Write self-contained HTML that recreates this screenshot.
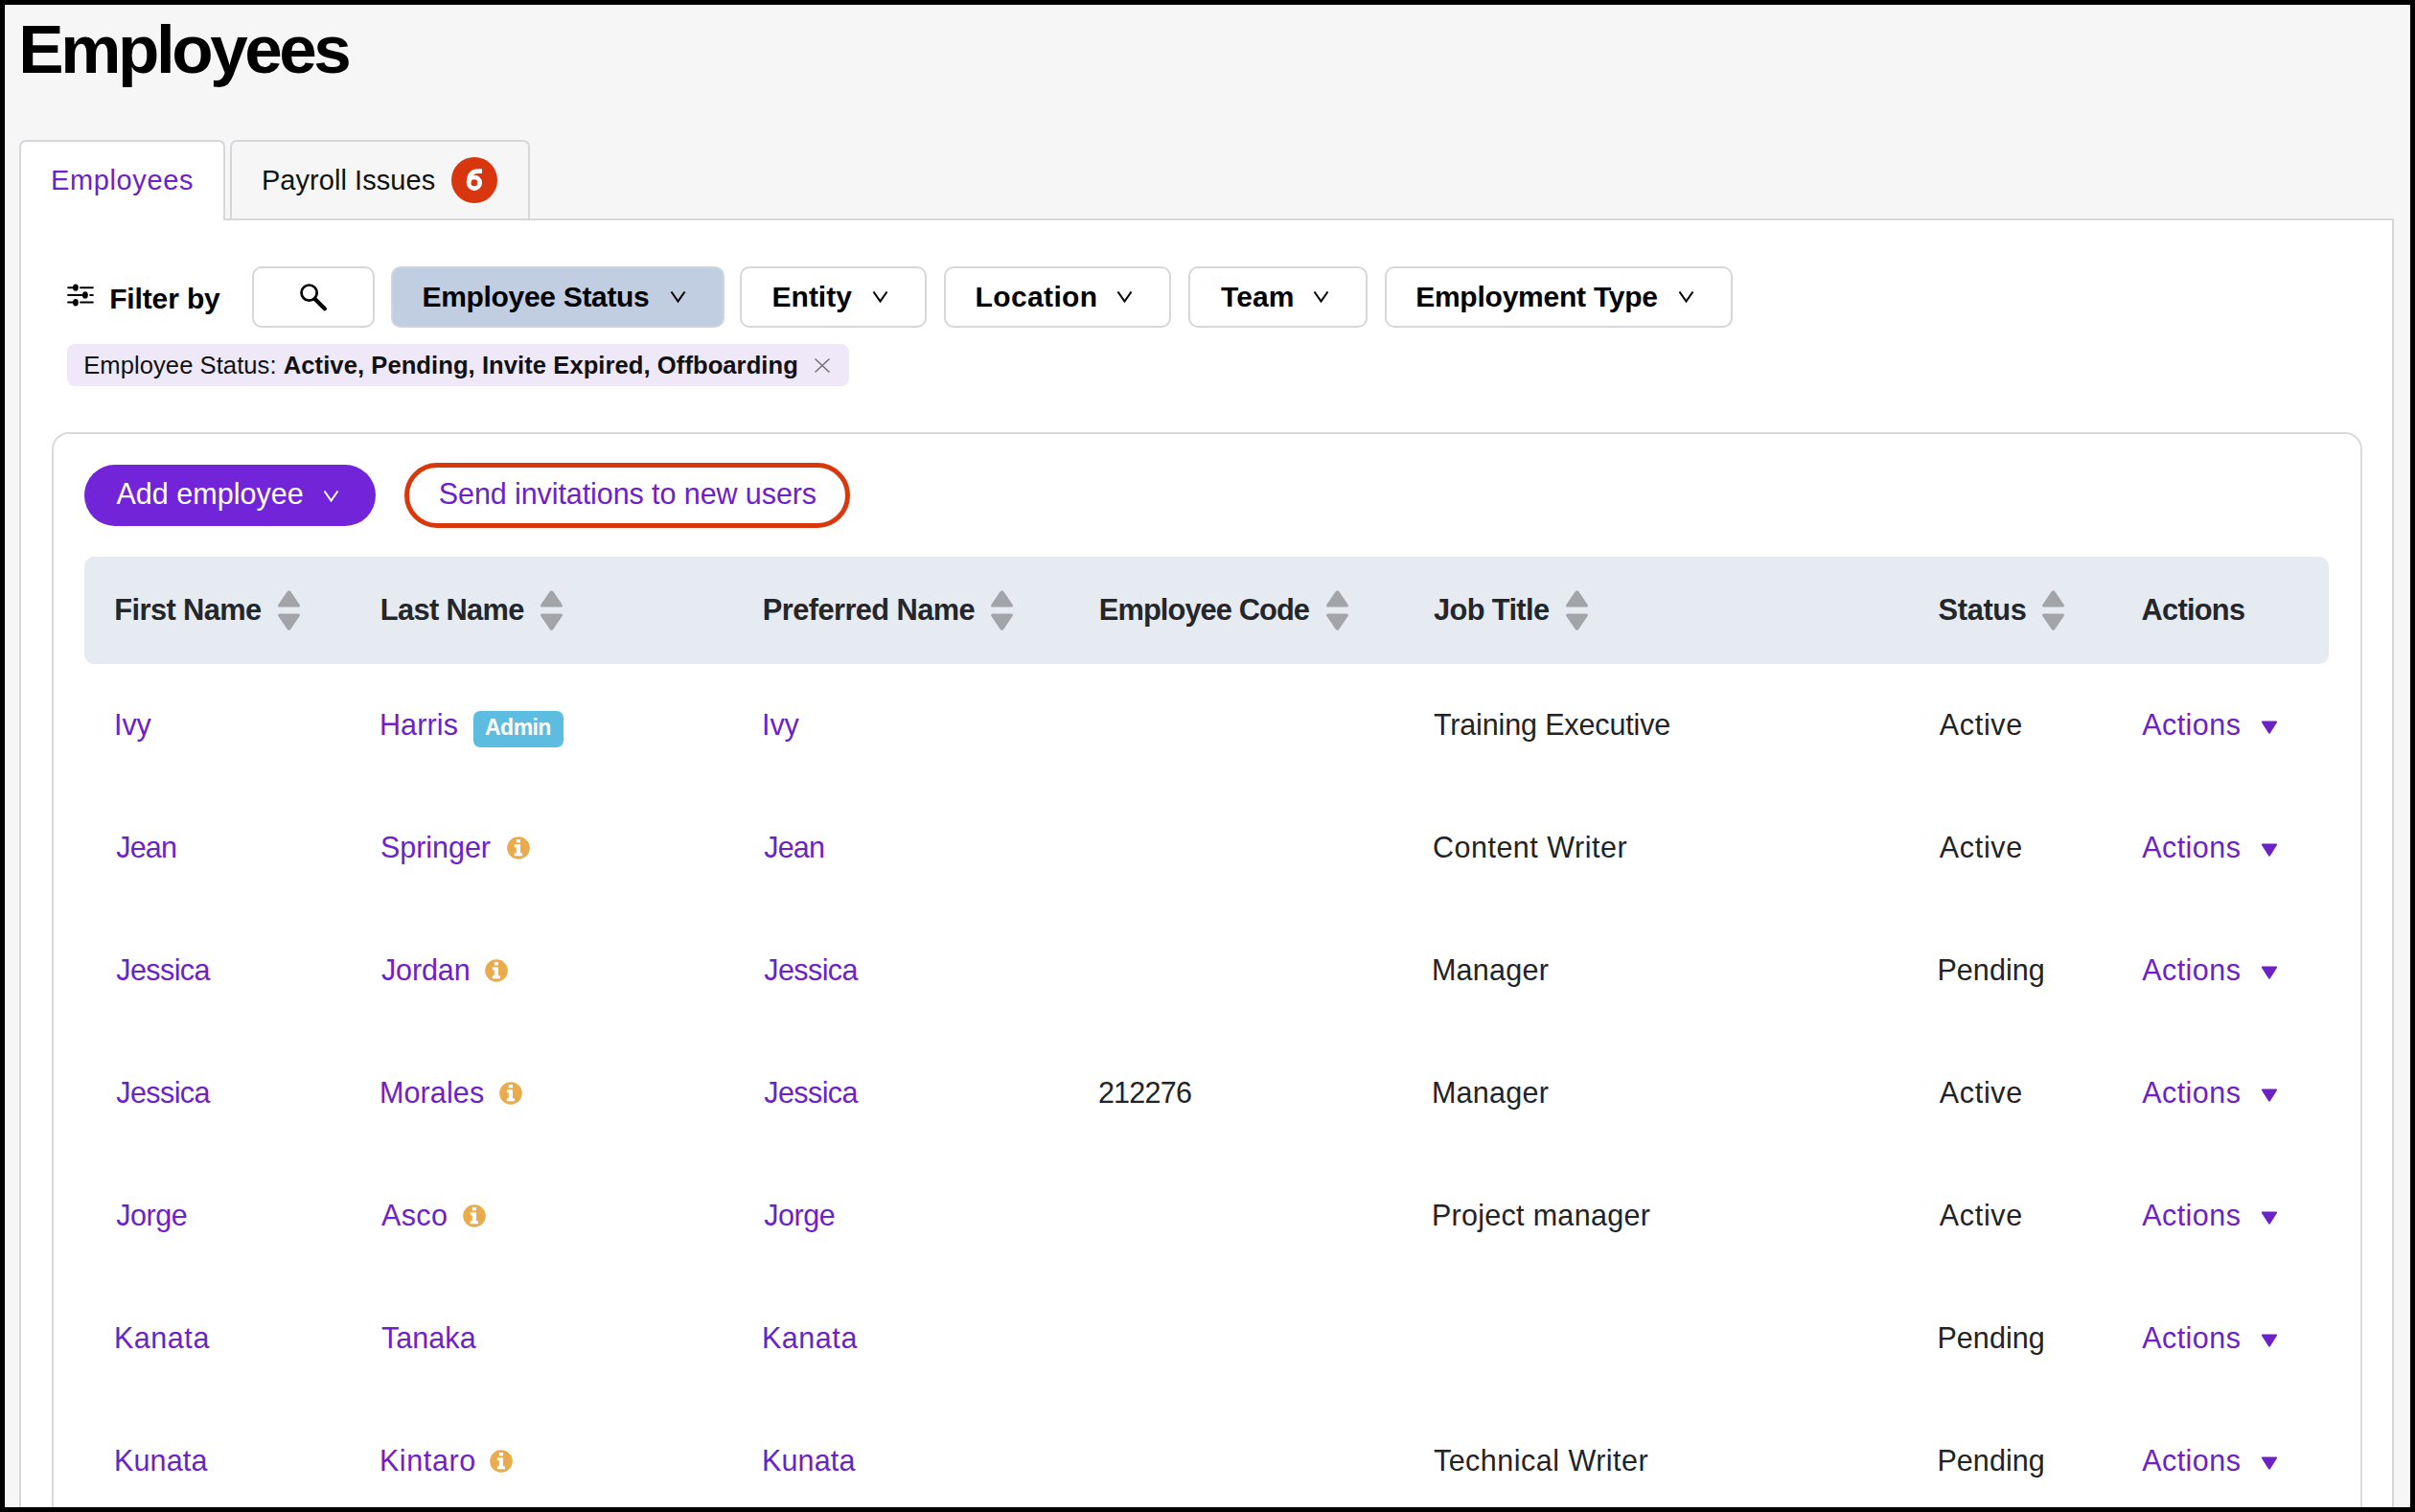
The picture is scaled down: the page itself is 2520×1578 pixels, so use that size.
<!DOCTYPE html>
<html><head><meta charset="utf-8"><style>
html,body{margin:0;padding:0;width:2520px;height:1578px;overflow:hidden;background:#000;}
body{position:relative;font-family:"Liberation Sans",sans-serif;}
.t{position:absolute;white-space:nowrap;line-height:40px;height:40px;}
.b{position:absolute;display:block;}
#pg{position:absolute;left:0;top:0;width:2520px;height:1578px;background:#f6f6f6;clip-path:inset(5px);overflow:hidden;}
</style></head><body>
<div id="pg">
<div class="b" style="left:20px;top:228px;width:2478px;height:1400px;background:#fff;border:2px solid #d6d6db;border-bottom:none;box-sizing:border-box;"></div>
<div class="b" style="left:20px;top:146px;width:215px;height:84px;background:#fff;border:2px solid #d6d6db;border-bottom:none;border-radius:7px 7px 0 0;box-sizing:border-box;"></div>
<div class="b" style="left:240px;top:146px;width:313px;height:82px;background:#f6f6f6;border:2px solid #d6d6db;border-bottom:none;border-radius:7px 7px 0 0;box-sizing:border-box;"></div>
<div class="b" style="left:471px;top:164px;width:48px;height:48px;background:#d8360e;border-radius:50%;"></div>
<svg class="b" style="left:471px;top:164px" width="48" height="48" viewBox="471 164 48 48"><circle cx="494.9" cy="190.8" r="5.8" stroke="#fff" stroke-width="4.6" fill="none"/><path d="M489.1 190.8 C489.1 182.5 492.5 178.6 499 178.6 L503 178.6" stroke="#fff" stroke-width="4.6" fill="none"/></svg>
<svg class="b" style="left:64px;top:290px" width="40" height="36" viewBox="64 290 40 36"><g stroke="#000" stroke-width="2" stroke-linecap="round" fill="none"><path d="M71.1 300.2 H78 M84 300.2 H96.8 M71.1 307.9 H88 M94.2 307.9 H96.8 M71.1 315.6 H78 M84 315.6 H96.8"/></g><g fill="#000"><ellipse cx="78.9" cy="300.1" rx="2.9" ry="3.7"/><ellipse cx="88.9" cy="307.9" rx="2.9" ry="3.7"/><ellipse cx="78.9" cy="315.8" rx="2.9" ry="3.7"/></g></svg>
<div class="b" style="left:263px;top:278px;width:128px;height:64px;background:#fff;border:2px solid #d6d6db;border-radius:10px;box-sizing:border-box;"></div>
<svg class="b" style="left:305px;top:290px" width="42" height="40" viewBox="0 0 42 40"><circle cx="17.6" cy="15.6" r="8.1" stroke="#000" stroke-width="2.7" fill="none"/><line x1="23.6" y1="22" x2="33.9" y2="32.2" stroke="#000" stroke-width="4.2" stroke-linecap="round"/></svg>
<div class="b" style="left:407.5px;top:278px;width:348px;height:64px;background:#c1cde0;border:2px solid #d0d5dd;border-radius:10px;box-sizing:border-box;"></div>
<svg class="b" style="left:697.9px;top:301.8px" width="19" height="15" viewBox="0 0 19 15"><polyline points="2.5,2.5 9.5,12.5 16.5,2.5" stroke="#000" stroke-width="2.1" fill="none"/></svg>
<div class="b" style="left:772px;top:278px;width:195px;height:64px;background:#fff;border:2px solid #d6d6db;border-radius:10px;box-sizing:border-box;"></div>
<svg class="b" style="left:909.4px;top:301.8px" width="19" height="15" viewBox="0 0 19 15"><polyline points="2.5,2.5 9.5,12.5 16.5,2.5" stroke="#000" stroke-width="2.1" fill="none"/></svg>
<div class="b" style="left:985px;top:278px;width:237px;height:64px;background:#fff;border:2px solid #d6d6db;border-radius:10px;box-sizing:border-box;"></div>
<svg class="b" style="left:1164.4px;top:301.8px" width="19" height="15" viewBox="0 0 19 15"><polyline points="2.5,2.5 9.5,12.5 16.5,2.5" stroke="#000" stroke-width="2.1" fill="none"/></svg>
<div class="b" style="left:1240px;top:278px;width:187px;height:64px;background:#fff;border:2px solid #d6d6db;border-radius:10px;box-sizing:border-box;"></div>
<svg class="b" style="left:1369.4px;top:301.8px" width="19" height="15" viewBox="0 0 19 15"><polyline points="2.5,2.5 9.5,12.5 16.5,2.5" stroke="#000" stroke-width="2.1" fill="none"/></svg>
<div class="b" style="left:1445px;top:278px;width:363px;height:64px;background:#fff;border:2px solid #d6d6db;border-radius:10px;box-sizing:border-box;"></div>
<svg class="b" style="left:1750.4px;top:301.8px" width="19" height="15" viewBox="0 0 19 15"><polyline points="2.5,2.5 9.5,12.5 16.5,2.5" stroke="#000" stroke-width="2.1" fill="none"/></svg>
<div class="b" style="left:70px;top:359px;width:816px;height:44px;background:#efe8f8;border-radius:8px;"></div>
<svg class="b" style="left:848px;top:372px" width="20" height="19" viewBox="0 0 20 19"><g stroke="#707074" stroke-width="1.5"><line x1="2.5" y1="2.5" x2="17.5" y2="16.5"/><line x1="17.5" y1="2.5" x2="2.5" y2="16.5"/></g></svg>
<div class="b" style="left:54px;top:451px;width:2411px;height:1400px;background:#fff;border:2px solid #d9d9de;border-radius:18px;box-sizing:border-box;"></div>
<div class="b" style="left:88px;top:485px;width:304px;height:64px;background:#7224d8;border-radius:32px;"></div>
<svg class="b" style="left:336px;top:509.5px" width="19" height="15" viewBox="0 0 19 15"><polyline points="2.5,2.5 9.5,12.5 16.5,2.5" stroke="#fff" stroke-width="2" fill="none"/></svg>
<div class="b" style="left:422px;top:483px;width:465px;height:68px;background:#fff;border:5px solid #d9380d;border-radius:34px;box-sizing:border-box;"></div>
<div class="b" style="left:88px;top:581px;width:2342px;height:112px;background:#e6eaf1;border-radius:10px;"></div>
<svg class="b" style="left:289px;top:615px" width="25" height="44" viewBox="0 0 25 44"><path d="M12.5 1.2 Q13.6 1.2 14.6 2.7 L23.6 16 Q24.8 18.6 22 18.6 L3 18.6 Q0.2 18.6 1.4 16 L10.4 2.7 Q11.4 1.2 12.5 1.2Z" fill="#a3a4a8"/><path d="M12.5 42.8 Q13.6 42.8 14.6 41.3 L23.6 28 Q24.8 25.4 22 25.4 L3 25.4 Q0.2 25.4 1.4 28 L10.4 41.3 Q11.4 42.8 12.5 42.8Z" fill="#a3a4a8"/></svg>
<svg class="b" style="left:563px;top:615px" width="25" height="44" viewBox="0 0 25 44"><path d="M12.5 1.2 Q13.6 1.2 14.6 2.7 L23.6 16 Q24.8 18.6 22 18.6 L3 18.6 Q0.2 18.6 1.4 16 L10.4 2.7 Q11.4 1.2 12.5 1.2Z" fill="#a3a4a8"/><path d="M12.5 42.8 Q13.6 42.8 14.6 41.3 L23.6 28 Q24.8 25.4 22 25.4 L3 25.4 Q0.2 25.4 1.4 28 L10.4 41.3 Q11.4 42.8 12.5 42.8Z" fill="#a3a4a8"/></svg>
<svg class="b" style="left:1033.4px;top:615px" width="25" height="44" viewBox="0 0 25 44"><path d="M12.5 1.2 Q13.6 1.2 14.6 2.7 L23.6 16 Q24.8 18.6 22 18.6 L3 18.6 Q0.2 18.6 1.4 16 L10.4 2.7 Q11.4 1.2 12.5 1.2Z" fill="#a3a4a8"/><path d="M12.5 42.8 Q13.6 42.8 14.6 41.3 L23.6 28 Q24.8 25.4 22 25.4 L3 25.4 Q0.2 25.4 1.4 28 L10.4 41.3 Q11.4 42.8 12.5 42.8Z" fill="#a3a4a8"/></svg>
<svg class="b" style="left:1382.5px;top:615px" width="25" height="44" viewBox="0 0 25 44"><path d="M12.5 1.2 Q13.6 1.2 14.6 2.7 L23.6 16 Q24.8 18.6 22 18.6 L3 18.6 Q0.2 18.6 1.4 16 L10.4 2.7 Q11.4 1.2 12.5 1.2Z" fill="#a3a4a8"/><path d="M12.5 42.8 Q13.6 42.8 14.6 41.3 L23.6 28 Q24.8 25.4 22 25.4 L3 25.4 Q0.2 25.4 1.4 28 L10.4 41.3 Q11.4 42.8 12.5 42.8Z" fill="#a3a4a8"/></svg>
<svg class="b" style="left:1632.8px;top:615px" width="25" height="44" viewBox="0 0 25 44"><path d="M12.5 1.2 Q13.6 1.2 14.6 2.7 L23.6 16 Q24.8 18.6 22 18.6 L3 18.6 Q0.2 18.6 1.4 16 L10.4 2.7 Q11.4 1.2 12.5 1.2Z" fill="#a3a4a8"/><path d="M12.5 42.8 Q13.6 42.8 14.6 41.3 L23.6 28 Q24.8 25.4 22 25.4 L3 25.4 Q0.2 25.4 1.4 28 L10.4 41.3 Q11.4 42.8 12.5 42.8Z" fill="#a3a4a8"/></svg>
<svg class="b" style="left:2130px;top:615px" width="25" height="44" viewBox="0 0 25 44"><path d="M12.5 1.2 Q13.6 1.2 14.6 2.7 L23.6 16 Q24.8 18.6 22 18.6 L3 18.6 Q0.2 18.6 1.4 16 L10.4 2.7 Q11.4 1.2 12.5 1.2Z" fill="#a3a4a8"/><path d="M12.5 42.8 Q13.6 42.8 14.6 41.3 L23.6 28 Q24.8 25.4 22 25.4 L3 25.4 Q0.2 25.4 1.4 28 L10.4 41.3 Q11.4 42.8 12.5 42.8Z" fill="#a3a4a8"/></svg>
<div class="b" style="left:494px;top:742px;width:94px;height:38px;background:#5dbde0;border-radius:7px;"></div>
<svg class="b" style="left:2358px;top:751px" width="20" height="16" viewBox="0 0 20 16"><path d="M3 2.5 H17 L10 13.5 Z" fill="#6c22c8" stroke="#6c22c8" stroke-width="2.2" stroke-linejoin="round"/></svg>
<svg class="b" style="left:529.3px;top:873px" width="24" height="24" viewBox="0 0 24 24"><circle cx="12" cy="12" r="11.8" fill="#eaab4d"/><rect x="9.8" y="3" width="4.2" height="3.4" fill="#fff"/><path d="M7.8 8.3 H14 V17.2 H16 V20.3 H7.8 V17.2 H9.8 V11.2 H7.8 Z" fill="#fff"/></svg>
<svg class="b" style="left:2358px;top:879px" width="20" height="16" viewBox="0 0 20 16"><path d="M3 2.5 H17 L10 13.5 Z" fill="#6c22c8" stroke="#6c22c8" stroke-width="2.2" stroke-linejoin="round"/></svg>
<svg class="b" style="left:505.9px;top:1001px" width="24" height="24" viewBox="0 0 24 24"><circle cx="12" cy="12" r="11.8" fill="#eaab4d"/><rect x="9.8" y="3" width="4.2" height="3.4" fill="#fff"/><path d="M7.8 8.3 H14 V17.2 H16 V20.3 H7.8 V17.2 H9.8 V11.2 H7.8 Z" fill="#fff"/></svg>
<svg class="b" style="left:2358px;top:1007px" width="20" height="16" viewBox="0 0 20 16"><path d="M3 2.5 H17 L10 13.5 Z" fill="#6c22c8" stroke="#6c22c8" stroke-width="2.2" stroke-linejoin="round"/></svg>
<svg class="b" style="left:520.5px;top:1129px" width="24" height="24" viewBox="0 0 24 24"><circle cx="12" cy="12" r="11.8" fill="#eaab4d"/><rect x="9.8" y="3" width="4.2" height="3.4" fill="#fff"/><path d="M7.8 8.3 H14 V17.2 H16 V20.3 H7.8 V17.2 H9.8 V11.2 H7.8 Z" fill="#fff"/></svg>
<svg class="b" style="left:2358px;top:1135px" width="20" height="16" viewBox="0 0 20 16"><path d="M3 2.5 H17 L10 13.5 Z" fill="#6c22c8" stroke="#6c22c8" stroke-width="2.2" stroke-linejoin="round"/></svg>
<svg class="b" style="left:482.6px;top:1257px" width="24" height="24" viewBox="0 0 24 24"><circle cx="12" cy="12" r="11.8" fill="#eaab4d"/><rect x="9.8" y="3" width="4.2" height="3.4" fill="#fff"/><path d="M7.8 8.3 H14 V17.2 H16 V20.3 H7.8 V17.2 H9.8 V11.2 H7.8 Z" fill="#fff"/></svg>
<svg class="b" style="left:2358px;top:1263px" width="20" height="16" viewBox="0 0 20 16"><path d="M3 2.5 H17 L10 13.5 Z" fill="#6c22c8" stroke="#6c22c8" stroke-width="2.2" stroke-linejoin="round"/></svg>
<svg class="b" style="left:2358px;top:1391px" width="20" height="16" viewBox="0 0 20 16"><path d="M3 2.5 H17 L10 13.5 Z" fill="#6c22c8" stroke="#6c22c8" stroke-width="2.2" stroke-linejoin="round"/></svg>
<svg class="b" style="left:510.9px;top:1513px" width="24" height="24" viewBox="0 0 24 24"><circle cx="12" cy="12" r="11.8" fill="#eaab4d"/><rect x="9.8" y="3" width="4.2" height="3.4" fill="#fff"/><path d="M7.8 8.3 H14 V17.2 H16 V20.3 H7.8 V17.2 H9.8 V11.2 H7.8 Z" fill="#fff"/></svg>
<svg class="b" style="left:2358px;top:1519px" width="20" height="16" viewBox="0 0 20 16"><path d="M3 2.5 H17 L10 13.5 Z" fill="#6c22c8" stroke="#6c22c8" stroke-width="2.2" stroke-linejoin="round"/></svg>
<div class="t" id="t0" style="left:19.32px;top:32px;font-size:71px;font-weight:700;color:#000;letter-spacing:-3.422px;">Employees</div>
<div class="t" id="t1" style="left:53.05px;top:168px;font-size:29px;font-weight:400;color:#6c22c8;letter-spacing:0.621px;">Employees</div>
<div class="t" id="t2" style="left:272.89px;top:168px;font-size:29px;font-weight:400;color:#111;letter-spacing:0.058px;">Payroll Issues</div>
<div class="t" id="t3" style="left:114.15px;top:292px;font-size:30px;font-weight:700;color:#000;letter-spacing:-0.132px;">Filter by</div>
<div class="t" id="t4" style="left:440.55px;top:290px;font-size:30px;font-weight:700;color:#000;letter-spacing:-0.322px;">Employee Status</div>
<div class="t" id="t5" style="left:805.62px;top:290px;font-size:30px;font-weight:700;color:#000;letter-spacing:-0.025px;">Entity</div>
<div class="t" id="t6" style="left:1017.55px;top:290px;font-size:30px;font-weight:700;color:#000;letter-spacing:0.368px;">Location</div>
<div class="t" id="t7" style="left:1273.95px;top:290px;font-size:30px;font-weight:700;color:#000;letter-spacing:0.135px;">Team</div>
<div class="t" id="t8" style="left:1477.15px;top:290px;font-size:30px;font-weight:700;color:#000;letter-spacing:-0.232px;">Employment Type</div>
<div class="t" id="t9" style="left:87.18px;top:361px;font-size:25.6px;font-weight:400;color:#111;letter-spacing:0.054px;">Employee Status: <b>Active, Pending, Invite Expired, Offboarding</b></div>
<div class="t" id="t10" style="left:121.48px;top:495px;font-size:30.5px;font-weight:400;color:#fff;letter-spacing:0.018px;">Add employee</div>
<div class="t" id="t11" style="left:457.78px;top:495px;font-size:30.5px;font-weight:400;color:#6c22c8;letter-spacing:-0.086px;">Send invitations to new users</div>
<div class="t" id="t12" style="left:119.37px;top:617px;font-size:30.8px;font-weight:700;color:#24262a;letter-spacing:-0.604px;">First Name</div>
<div class="t" id="t13" style="left:396.79px;top:617px;font-size:30.8px;font-weight:700;color:#24262a;letter-spacing:-0.635px;">Last Name</div>
<div class="t" id="t14" style="left:795.86px;top:617px;font-size:30.8px;font-weight:700;color:#24262a;letter-spacing:-0.581px;">Preferred Name</div>
<div class="t" id="t15" style="left:1146.79px;top:617px;font-size:30.8px;font-weight:700;color:#24262a;letter-spacing:-0.902px;">Employee Code</div>
<div class="t" id="t16" style="left:1495.96px;top:617px;font-size:30.8px;font-weight:700;color:#24262a;letter-spacing:-0.624px;">Job Title</div>
<div class="t" id="t17" style="left:2022.55px;top:617px;font-size:30.8px;font-weight:700;color:#24262a;letter-spacing:-0.341px;">Status</div>
<div class="t" id="t18" style="left:2234.57px;top:617px;font-size:30.8px;font-weight:700;color:#24262a;letter-spacing:-0.745px;">Actions</div>
<div class="t" id="t19" style="left:119.01px;top:736px;font-size:30.5px;font-weight:400;color:#6c22c8;letter-spacing:-0.090px;">Ivy</div>
<div class="t" id="t20" style="left:395.89px;top:736px;font-size:30.5px;font-weight:400;color:#6c22c8;letter-spacing:0.173px;">Harris</div>
<div class="t" id="t21" style="left:506.07px;top:739px;font-size:23px;font-weight:700;color:#fff;letter-spacing:-0.548px;">Admin</div>
<div class="t" id="t22" style="left:795.01px;top:736px;font-size:30.5px;font-weight:400;color:#6c22c8;letter-spacing:-0.090px;">Ivy</div>
<div class="t" id="t23" style="left:1495.92px;top:736px;font-size:30.5px;font-weight:400;color:#222327;letter-spacing:-0.142px;">Training Executive</div>
<div class="t" id="t24" style="left:2023.72px;top:736px;font-size:30.5px;font-weight:400;color:#222327;letter-spacing:0.700px;">Active</div>
<div class="t" id="t25" style="left:2235.16px;top:736px;font-size:30.5px;font-weight:400;color:#6c22c8;letter-spacing:0.466px;">Actions</div>
<div class="t" id="t26" style="left:121.25px;top:864px;font-size:30.5px;font-weight:400;color:#6c22c8;letter-spacing:-0.838px;">Jean</div>
<div class="t" id="t27" style="left:396.93px;top:864px;font-size:30.5px;font-weight:400;color:#6c22c8;letter-spacing:-0.031px;">Springer</div>
<div class="t" id="t28" style="left:797.25px;top:864px;font-size:30.5px;font-weight:400;color:#6c22c8;letter-spacing:-0.838px;">Jean</div>
<div class="t" id="t29" style="left:1494.88px;top:864px;font-size:30.5px;font-weight:400;color:#222327;letter-spacing:0.519px;">Content Writer</div>
<div class="t" id="t30" style="left:2023.72px;top:864px;font-size:30.5px;font-weight:400;color:#222327;letter-spacing:0.700px;">Active</div>
<div class="t" id="t31" style="left:2235.16px;top:864px;font-size:30.5px;font-weight:400;color:#6c22c8;letter-spacing:0.466px;">Actions</div>
<div class="t" id="t32" style="left:121.25px;top:992px;font-size:30.5px;font-weight:400;color:#6c22c8;letter-spacing:-0.573px;">Jessica</div>
<div class="t" id="t33" style="left:397.98px;top:992px;font-size:30.5px;font-weight:400;color:#6c22c8;letter-spacing:-0.117px;">Jordan</div>
<div class="t" id="t34" style="left:797.25px;top:992px;font-size:30.5px;font-weight:400;color:#6c22c8;letter-spacing:-0.573px;">Jessica</div>
<div class="t" id="t35" style="left:1493.89px;top:992px;font-size:30.5px;font-weight:400;color:#222327;letter-spacing:0.293px;">Manager</div>
<div class="t" id="t36" style="left:2021.42px;top:992px;font-size:30.5px;font-weight:400;color:#222327;letter-spacing:0.069px;">Pending</div>
<div class="t" id="t37" style="left:2235.16px;top:992px;font-size:30.5px;font-weight:400;color:#6c22c8;letter-spacing:0.466px;">Actions</div>
<div class="t" id="t38" style="left:121.25px;top:1120px;font-size:30.5px;font-weight:400;color:#6c22c8;letter-spacing:-0.573px;">Jessica</div>
<div class="t" id="t39" style="left:395.89px;top:1120px;font-size:30.5px;font-weight:400;color:#6c22c8;letter-spacing:0.138px;">Morales</div>
<div class="t" id="t40" style="left:797.25px;top:1120px;font-size:30.5px;font-weight:400;color:#6c22c8;letter-spacing:-0.573px;">Jessica</div>
<div class="t" id="t41" style="left:1145.89px;top:1120px;font-size:30.5px;font-weight:400;color:#222327;letter-spacing:-0.736px;">212276</div>
<div class="t" id="t42" style="left:1493.89px;top:1120px;font-size:30.5px;font-weight:400;color:#222327;letter-spacing:0.293px;">Manager</div>
<div class="t" id="t43" style="left:2023.72px;top:1120px;font-size:30.5px;font-weight:400;color:#222327;letter-spacing:0.700px;">Active</div>
<div class="t" id="t44" style="left:2235.16px;top:1120px;font-size:30.5px;font-weight:400;color:#6c22c8;letter-spacing:0.466px;">Actions</div>
<div class="t" id="t45" style="left:121.25px;top:1248px;font-size:30.5px;font-weight:400;color:#6c22c8;letter-spacing:-0.469px;">Jorge</div>
<div class="t" id="t46" style="left:397.98px;top:1248px;font-size:30.5px;font-weight:400;color:#6c22c8;letter-spacing:0.388px;">Asco</div>
<div class="t" id="t47" style="left:797.25px;top:1248px;font-size:30.5px;font-weight:400;color:#6c22c8;letter-spacing:-0.469px;">Jorge</div>
<div class="t" id="t48" style="left:1493.89px;top:1248px;font-size:30.5px;font-weight:400;color:#222327;letter-spacing:0.299px;">Project manager</div>
<div class="t" id="t49" style="left:2023.72px;top:1248px;font-size:30.5px;font-weight:400;color:#222327;letter-spacing:0.700px;">Active</div>
<div class="t" id="t50" style="left:2235.16px;top:1248px;font-size:30.5px;font-weight:400;color:#6c22c8;letter-spacing:0.466px;">Actions</div>
<div class="t" id="t51" style="left:118.92px;top:1376px;font-size:30.5px;font-weight:400;color:#6c22c8;letter-spacing:0.555px;">Kanata</div>
<div class="t" id="t52" style="left:397.92px;top:1376px;font-size:30.5px;font-weight:400;color:#6c22c8;letter-spacing:0.071px;">Tanaka</div>
<div class="t" id="t53" style="left:794.92px;top:1376px;font-size:30.5px;font-weight:400;color:#6c22c8;letter-spacing:0.555px;">Kanata</div>
<div class="t" id="t54" style="left:2021.42px;top:1376px;font-size:30.5px;font-weight:400;color:#222327;letter-spacing:0.069px;">Pending</div>
<div class="t" id="t55" style="left:2235.16px;top:1376px;font-size:30.5px;font-weight:400;color:#6c22c8;letter-spacing:0.466px;">Actions</div>
<div class="t" id="t56" style="left:118.92px;top:1504px;font-size:30.5px;font-weight:400;color:#6c22c8;letter-spacing:0.155px;">Kunata</div>
<div class="t" id="t57" style="left:395.89px;top:1504px;font-size:30.5px;font-weight:400;color:#6c22c8;letter-spacing:0.633px;">Kintaro</div>
<div class="t" id="t58" style="left:794.92px;top:1504px;font-size:30.5px;font-weight:400;color:#6c22c8;letter-spacing:0.155px;">Kunata</div>
<div class="t" id="t59" style="left:1495.92px;top:1504px;font-size:30.5px;font-weight:400;color:#222327;letter-spacing:0.493px;">Technical Writer</div>
<div class="t" id="t60" style="left:2021.42px;top:1504px;font-size:30.5px;font-weight:400;color:#222327;letter-spacing:0.069px;">Pending</div>
<div class="t" id="t61" style="left:2235.16px;top:1504px;font-size:30.5px;font-weight:400;color:#6c22c8;letter-spacing:0.466px;">Actions</div>
</div></body></html>
